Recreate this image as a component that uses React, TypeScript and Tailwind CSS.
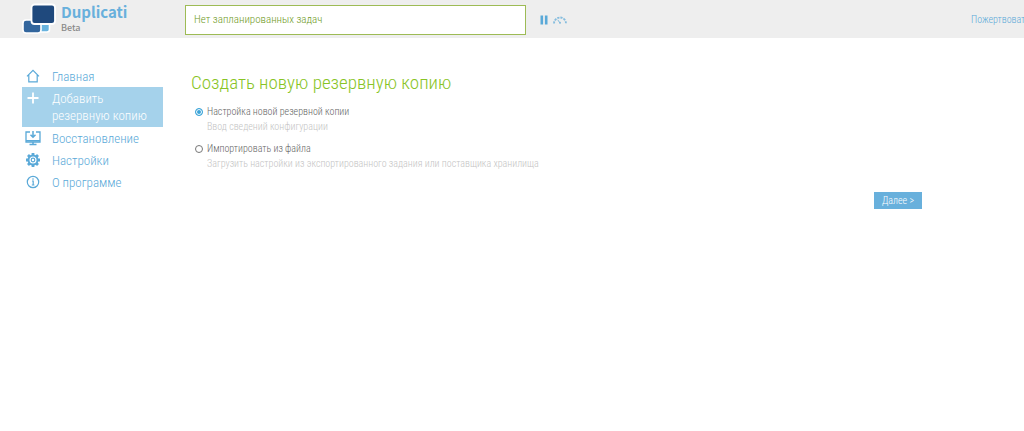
import { useState } from 'react'
import type { ReactNode } from 'react'
import clsx from 'clsx'

interface NavItem {
  id: string
  label: string
  icon: ReactNode
}

interface BackupOption {
  id: string
  label: string
  hint: string
}

const navItems: NavItem[] = [
  { id: 'home', label: 'Главная', icon: <HomeIcon /> },
  { id: 'add', label: 'Добавить резервную копию', icon: <PlusIcon /> },
  { id: 'restore', label: 'Восстановление', icon: <RestoreIcon /> },
  { id: 'settings', label: 'Настройки', icon: <GearIcon /> },
  { id: 'about', label: 'О программе', icon: <InfoIcon /> },
]

const options: BackupOption[] = [
  { id: 'new', label: 'Настройка новой резервной копии', hint: 'Ввод сведений конфигурации' },
  {
    id: 'import',
    label: 'Импортировать из файла',
    hint: 'Загрузить настройки из экспортированного задания или поставщика хранилища',
  },
]

function Logo() {
  return (
    <svg viewBox="0 0 34 32" className="w-[34px] h-8 shrink-0" aria-hidden="true">
      <rect x="16" y="19" width="11.5" height="10" rx="2.5" fill="#68b3de" stroke="#fff" strokeWidth="1.6" />
      <path d="M4 17h12v4h3v6a3 3 0 0 1-3 3H4a3 3 0 0 1-3-3v-7a3 3 0 0 1 3-3z" fill="#33669d" stroke="#fff" strokeWidth="1.6" />
      <rect x="9.5" y="1.5" width="23.5" height="19.5" rx="3" fill="#1f497d" stroke="#fff" strokeWidth="1.8" />
    </svg>
  )
}

function HomeIcon() {
  return (
    <svg viewBox="0 0 16 16" className="w-4 h-4" fill="none" stroke="currentColor" strokeWidth="1.2" aria-hidden="true">
      <path d="M2 8.4 8 2.4l6 6M3.8 6.8v7.1h8.4V6.8" />
    </svg>
  )
}

function PlusIcon() {
  return (
    <svg viewBox="0 0 16 16" className="w-4 h-4" fill="none" stroke="currentColor" strokeWidth="1.8" aria-hidden="true">
      <path d="M8 2.5v11M2.5 8h11" />
    </svg>
  )
}

function RestoreIcon() {
  return (
    <svg viewBox="0 0 16 16" className="w-4 h-4" fill="none" stroke="currentColor" aria-hidden="true">
      <path d="M5 2H1v10h14V2h-4" strokeWidth="1.3" />
      <path d="M1 10.8h14M8 12v2.3M4.5 14.5h7" strokeWidth="1.5" />
      <path d="M8 1v6M5.5 4.8 8 7.3l2.5-2.5" strokeWidth="1.5" />
    </svg>
  )
}

function GearIcon() {
  return (
    <svg viewBox="0 0 16 16" className="w-4 h-4" fill="none" stroke="currentColor" aria-hidden="true">
      <path
        d="M8 1v3M8 12v3M1 8h3M12 8h3M3 3l2.2 2.2M10.8 10.8 13 13M13 3l-2.2 2.2M5.2 10.8 3 13"
        strokeWidth="2.8"
      />
      <circle cx="8" cy="8" r="4.5" strokeWidth="2" />
      <circle cx="8" cy="8" r="1.8" strokeWidth="1.2" />
    </svg>
  )
}

function InfoIcon() {
  return (
    <svg viewBox="0 0 16 16" className="w-4 h-4" fill="none" stroke="currentColor" strokeWidth="1.2" aria-hidden="true">
      <circle cx="8" cy="8" r="5.7" />
      <path d="M7 7h1.2v4M6.8 11h2.6" />
      <circle cx="8" cy="5" r=".8" fill="currentColor" stroke="none" />
    </svg>
  )
}

function PauseIcon() {
  return (
    <svg viewBox="0 0 8 10" className="w-2 h-[10px]" fill="currentColor" aria-hidden="true">
      <path d="M.5.5h2.6v9H.5zM4.9.5h2.6v9H4.9z" />
    </svg>
  )
}

function GaugeIcon() {
  return (
    <svg viewBox="0 0 14 8" className="w-[14px] h-2" fill="none" stroke="currentColor" aria-hidden="true">
      <path d="M1 7.5a6 6 0 0 1 12 0" strokeWidth="1.8" strokeDasharray="2.2 1" />
      <path d="M7 7.2 4.8 3.8" strokeWidth="1" />
      <circle cx="7" cy="6.8" r="1" fill="currentColor" stroke="none" />
    </svg>
  )
}

export default function App() {
  const [active, setActive] = useState('add')
  const [selected, setSelected] = useState('new')

  return (
    <div className="overflow-hidden bg-white font-['Roboto_Condensed',Roboto,sans-serif] font-light text-[#5aa9d8]">
      <header className="flex h-[38px] items-center bg-[#eeeeee]">
        <div className="flex w-[185px] shrink-0 items-center gap-1 pl-[22px]">
          <Logo />
          <div className="pb-px pl-px font-['Noto_Sans_CJK_SC',sans-serif]">
            <div className="text-[15px] leading-[18px] font-bold text-[#68b0dc]">Duplicati</div>
            <div className="text-[9px] leading-[13px] font-medium text-[#8a8a8a]">Beta</div>
          </div>
        </div>
        <div className="mt-px flex h-[30px] w-1/3 items-center border border-[#9dbb55] bg-white px-2 pt-px text-[11px] text-[#6f9a25]">
          Нет запланированных задач
        </div>
        <div className="mt-px ml-[14px] flex items-center gap-[5px]">
          <button type="button" aria-label="Приостановить">
            <PauseIcon />
          </button>
          <button type="button" aria-label="Ограничение скорости" className="opacity-70">
            <GaugeIcon />
          </button>
        </div>
        <a href="#donate" className="mt-px ml-auto w-[53px] shrink-0 overflow-hidden text-[10px] leading-4 whitespace-nowrap">
          Пожертвовать
        </a>
      </header>

      <div className="flex">
        <nav className="w-[185px] shrink-0 pt-[27px] pr-[22px] pl-[22px]">
          {navItems.map((item) => (
            <a
              key={item.id}
              href={`#${item.id}`}
              onClick={() => setActive(item.id)}
              className={clsx(
                'flex gap-[11px] py-[3px] pr-2 pl-[3px] text-[13px] leading-[17px]',
                item.id === active ? 'bg-[#a5d2eb] text-white' : 'max-h-[22px]',
              )}
            >
              {item.icon}
              <span className="min-w-0 flex-1">{item.label}</span>
            </a>
          ))}
        </nav>

        <main className="min-w-0 flex-1 pt-8 pr-[102px] pl-[6px]">
          <h1 className="text-[19px] leading-[26px] text-[#88c425]">Создать новую резервную копию</h1>
          <form className="pt-2" onSubmit={(e) => e.preventDefault()}>
            {options.map((option) => (
              <div key={option.id} className="mb-[7px] pl-1">
                <label className="flex items-center gap-1 text-[10px] leading-[15px] text-[#666666]">
                  <input
                    type="radio"
                    name="backup"
                    value={option.id}
                    checked={selected === option.id}
                    onChange={() => setSelected(option.id)}
                    aria-describedby={`${option.id}-hint`}
                    className="h-2 w-2 shrink-0 appearance-none rounded-full border border-[#777777] checked:border-[#3ba4d8] checked:bg-[#3ba4d8] checked:shadow-[inset_0_0_0_1px_white]"
                  />
                  {option.label}
                </label>
                <p id={`${option.id}-hint`} className="pl-3 text-[10px] leading-[15px] text-[#c4c4c4]">
                  {option.hint}
                </p>
              </div>
            ))}
            <div className="flex justify-end pt-[14px]">
              <button type="submit" className="bg-[#68b0dc] px-2 text-[10px] leading-[17px] text-white">
                Далее &gt;
              </button>
            </div>
          </form>
        </main>
      </div>
    </div>
  )
}
